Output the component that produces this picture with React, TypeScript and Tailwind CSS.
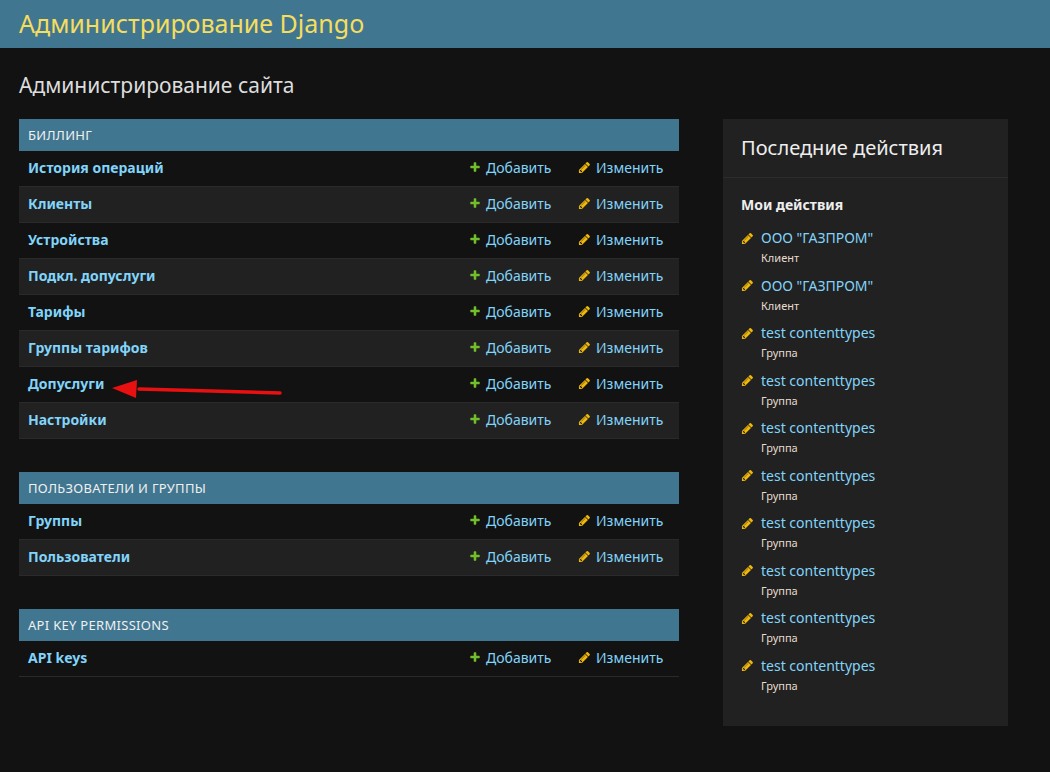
const FONT = "font-['Noto_Sans',_'Open_Sans',_sans-serif]";

type Section = { title: string; items: string[] };

const sections: Section[] = [
  {
    title: "Биллинг",
    items: [
      "История операций",
      "Клиенты",
      "Устройства",
      "Подкл. допуслуги",
      "Тарифы",
      "Группы тарифов",
      "Допуслуги",
      "Настройки",
    ],
  },
  { title: "Пользователи и группы", items: ["Группы", "Пользователи"] },
  { title: "API Key Permissions", items: ["API keys"] },
];

const actions = [
  { name: 'ООО "ГАЗПРОМ"', type: "Клиент" },
  { name: 'ООО "ГАЗПРОМ"', type: "Клиент" },
  ...Array.from({ length: 8 }, () => ({ name: "test contenttypes", type: "Группа" })),
];

function AddIcon() {
  return (
    <svg width="12" height="12" viewBox="0 0 1792 1792" className="shrink-0">
      <path
        fill="#70bf2b"
        d="M1600 796v192q0 40-28 68t-68 28h-416v416q0 40-28 68t-68 28h-192q-40 0-68-28t-28-68v-416h-416q-40 0-68-28t-28-68v-192q0-40 28-68t68-28h416v-416q0-40 28-68t68-28h192q40 0 68 28t28 68v416h416q40 0 68 28t28 68z"
      />
    </svg>
  );
}

function ChangeIcon() {
  return (
    <svg width="13" height="13" viewBox="0 0 1792 1792" className="shrink-0">
      <path
        fill="#efb80b"
        d="M491 1536l91-91-235-235-91 91v107h128v128h107zm523-928q0-22-22-22-10 0-17 7l-542 542q-7 7-7 17 0 22 22 22 10 0 17-7l542-542q7-7 7-17zm-54-192l416 416-832 832h-416v-416zm683 96q0 53-37 90l-166 166-416-416 166-165q36-38 90-38 53 0 91 38l235 234q37 39 37 91z"
      />
    </svg>
  );
}

function Module({ section, last }: { section: Section; last?: boolean }) {
  return (
    <div className={last ? "" : "mb-[33px]"}>
      <div className="h-[32px] bg-[#417690] px-[9px] pt-[2px] flex items-center text-[13px] uppercase text-[#f0f0f0] tracking-[0.3px]">
        {section.title}
      </div>
      {section.items.map((item, i) => (
        <div
          key={item}
          className={`h-[36px] flex items-center border-b border-[#2a2a2a] px-[9px] pb-[3px] ${
            i % 2 === 1 ? "bg-[#212121]" : "bg-[#121212]"
          }`}
        >
          <span className="flex-1 text-[14px] font-bold text-[#81d4fa]">{item}</span>
          <span className="flex items-center gap-[5px] text-[14px] text-[#81d4fa] w-[109px]">
            <AddIcon />
            Добавить
          </span>
          <span className="flex items-center gap-[5px] text-[14px] text-[#81d4fa] w-[92px]">
            <ChangeIcon />
            Изменить
          </span>
        </div>
      ))}
    </div>
  );
}

export default function App() {
  return (
    <div className={`${FONT} min-h-[772px] bg-[#121212] text-[#eeeeee]`}>
      {/* Header */}
      <div className="h-[48px] bg-[#417690] px-[19px] pb-[2px] flex items-center">
        <span className="text-[25px] text-[#f5dd5d] leading-none">Администрирование Django</span>
      </div>

      <div className="px-[19px] pt-[25px]">
        <h1 className="text-[21px] leading-[24px] text-[#dddddd] mb-[22px]">Администрирование сайта</h1>

        <div className="flex gap-[44px]">
          {/* App list */}
          <div className="relative w-[660px]">
            {sections.map((s, i) => (
              <Module key={s.title} section={s} last={i === sections.length - 1} />
            ))}
            <svg
              className="absolute left-0 top-0 pointer-events-none"
              width="300"
              height="300"
              viewBox="0 0 300 300"
            >
              <line x1="261" y1="274" x2="120" y2="270" stroke="#e81010" strokeWidth="3.5" strokeLinecap="round" />
              <polygon points="93,269 118,261 117,279" fill="#e81010" />
            </svg>
          </div>

          {/* Recent actions */}
          <div className="w-[285px] h-[607px] bg-[#212121]">
            <h2 className="px-[18px] py-[17px] text-[20px] leading-[24px] text-[#eeeeee] border-b border-[#2c2c2c]">
              Последние действия
            </h2>
            <div className="px-[18px] pt-[17px]">
              <h3 className="text-[14px] leading-[20px] font-bold text-[#eeeeee] mb-[13px]">Мои действия</h3>
              <ul>
                {actions.map((a, i) => (
                  <li key={i} className="h-[47.5px]">
                    <div className="flex items-center gap-[7px] leading-[20px]">
                      <ChangeIcon />
                      <span className="text-[14px] text-[#81d4fa]">{a.name}</span>
                    </div>
                    <div className="pl-[20px] text-[11px] leading-[14px] mt-[3px] text-[#e6dcd0]">{a.type}</div>
                  </li>
                ))}
              </ul>
            </div>
          </div>
        </div>
      </div>
    </div>
  );
}
